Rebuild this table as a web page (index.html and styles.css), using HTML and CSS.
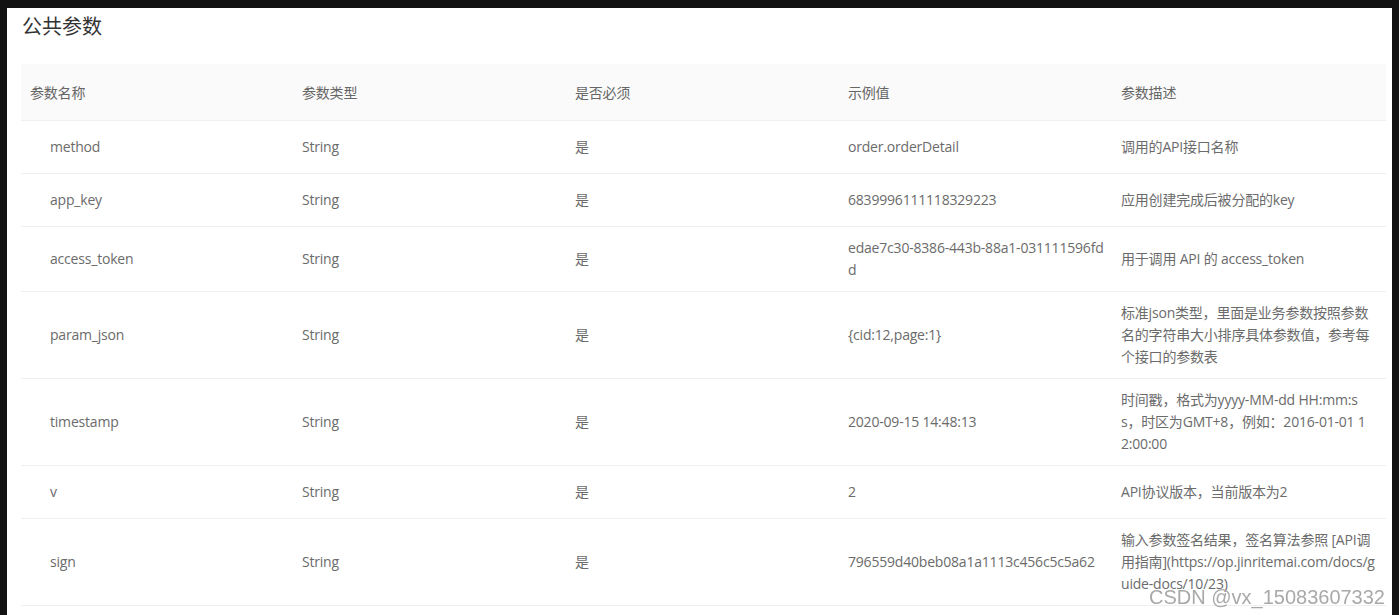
FILE: index.html
```html
<!DOCTYPE html>
<html lang="zh-CN">
<head>
<meta charset="utf-8">
<title>公共参数</title>
<link rel="stylesheet" href="styles.css">
</head>
<body>
<div class="page">
  <h3 class="title">公共参数</h3>
  <table class="params">
    <colgroup>
      <col class="col"><col class="col"><col class="col"><col class="col"><col class="col">
    </colgroup>
    <thead>
      <tr>
        <th class="first">参数名称</th>
        <th>参数类型</th>
        <th>是否必须</th>
        <th>示例值</th>
        <th>参数描述</th>
      </tr>
    </thead>
    <tbody>
      <tr class="row">
        <td class="name">method</td>
        <td>String</td>
        <td>是</td>
        <td>order.orderDetail</td>
        <td>调用的API接口名称</td>
      </tr>
      <tr class="row">
        <td class="name">app_key</td>
        <td>String</td>
        <td>是</td>
        <td>6839996111118329223</td>
        <td>应用创建完成后被分配的key</td>
      </tr>
      <tr class="row">
        <td class="name">access_token</td>
        <td>String</td>
        <td>是</td>
        <td>edae7c30-8386-443b-88a1-031111596fd<br>d</td>
        <td>用于调用 API 的 access_token</td>
      </tr>
      <tr class="row">
        <td class="name">param_json</td>
        <td>String</td>
        <td>是</td>
        <td>{cid:12,page:1}</td>
        <td>标准json类型，里面是业务参数按照参数<br>名的字符串大小排序具体参数值，参考每<br>个接口的参数表</td>
      </tr>
      <tr class="row">
        <td class="name">timestamp</td>
        <td>String</td>
        <td>是</td>
        <td>2020-09-15 14:48:13</td>
        <td>时间戳，格式为yyyy-MM-dd HH:mm:s<br>s，时区为GMT+8，例如：2016-01-01 1<br>2:00:00</td>
      </tr>
      <tr class="row">
        <td class="name">v</td>
        <td>String</td>
        <td>是</td>
        <td>2</td>
        <td>API协议版本，当前版本为2</td>
      </tr>
      <tr class="row">
        <td class="name">sign</td>
        <td>String</td>
        <td>是</td>
        <td>796559d40beb08a1a1113c456c5c5a62</td>
        <td>输入参数签名结果，签名算法参照 [API调<br>用指南](https://op.jinritemai.com/docs/g<br>uide-docs/10/23)</td>
      </tr>
    </tbody>
  </table>
</div>
<div class="watermark">CSDN @vx_15083607332</div>
</body>
</html>
```

FILE: styles.css
```css
html {
  background: #121212;
}
body {
  margin: 0;
  padding: 8px 7px 0 7px;
  font-family: "Open Sans", "Noto Sans CJK SC", sans-serif;
  font-size: 14px;
  color: #6b6b6b;
}
.page {
  background: #fff;
  min-height: 607px;
  box-sizing: border-box;
  padding: 4px 6px 0 14px;
}
.title {
  margin: 0 0 24px 1px;
  font-size: 20px;
  line-height: 28px;
  font-weight: normal;
  color: #333;
  font-family: "Noto Sans CJK SC", sans-serif;
}
.params {
  width: 100%;
  table-layout: fixed;
  border-collapse: collapse;
  letter-spacing: -0.2px;
}
.col {
  width: 20%;
}
.params th {
  text-align: left;
  font-weight: normal;
  color: #666;
  background: #fafafa;
  padding: 18px 8px 16px 8px;
  line-height: 22px;
  border-bottom: 1px solid #efefef;
}
.params th.first {
  padding-left: 9px;
}
.params td {
  padding: 10px 8px;
  line-height: 22px;
  vertical-align: middle;
  border-bottom: 1px solid #efefef;
  word-break: break-all;
  white-space: nowrap;
}
.row {
  height: 53px;
}
.params td.name {
  padding-left: 29px;
}
.watermark {
  position: fixed;
  right: 14px;
  bottom: 6px;
  font-family: "Liberation Sans", Arial, sans-serif;
  font-size: 20px;
  line-height: 24px;
  color: #a9a9a9;
}
```
